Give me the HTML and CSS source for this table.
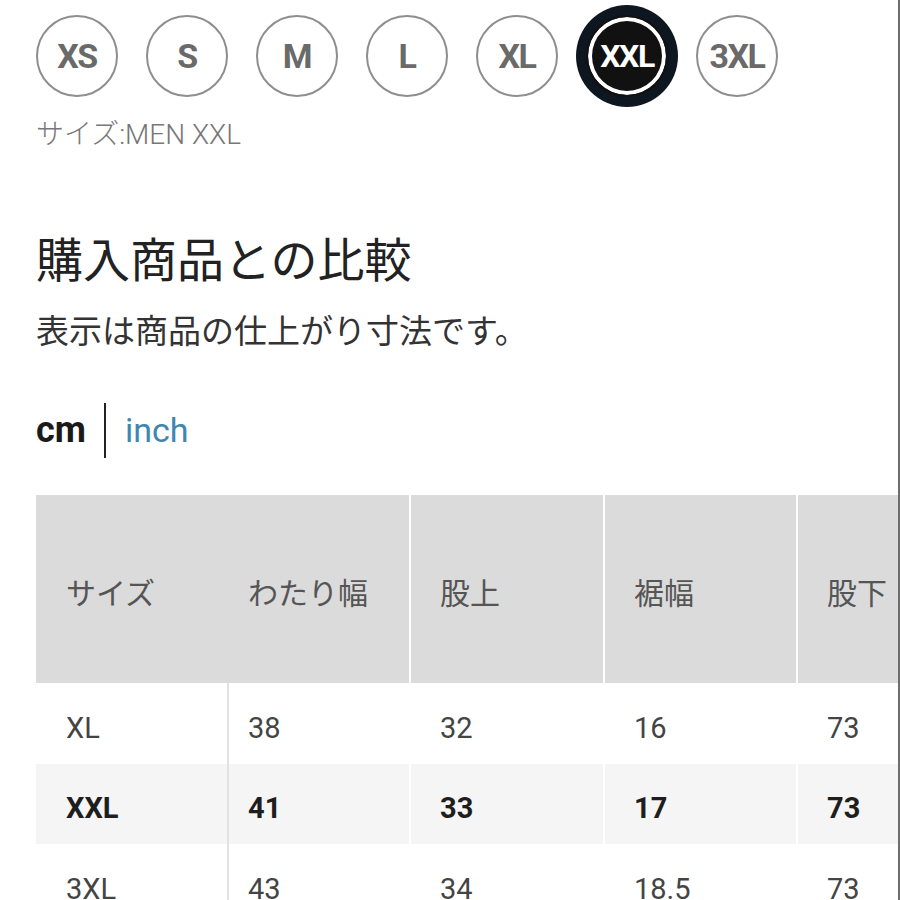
FILE: index.html
```html
<!DOCTYPE html>
<html lang="ja">
<head>
<meta charset="utf-8">
<link rel="stylesheet" href="styles.css">
</head>
<body>
<div class="page">
  <div class="sizes">
    <div class="size">XS</div>
    <div class="size">S</div>
    <div class="size">M</div>
    <div class="size">L</div>
    <div class="size">XL</div>
    <div class="size active">XXL</div>
    <div class="size">3XL</div>
  </div>
  <p class="size-label">サイズ:MEN XXL</p>
  <h2 class="title">購入商品との比較</h2>
  <p class="note">表示は商品の仕上がり寸法です。</p>
  <div class="units">
    <span class="unit-on">cm</span>
    <span class="sep"></span>
    <span class="unit-off">inch</span>
  </div>
  <table class="chart">
    <colgroup>
      <col class="c1"><col class="c2"><col class="c3"><col class="c4"><col class="c5">
    </colgroup>
    <thead>
      <tr>
        <th class="first">サイズ</th>
        <th class="second">わたり幅</th>
        <th>股上</th>
        <th>裾幅</th>
        <th>股下</th>
      </tr>
    </thead>
    <tbody>
      <tr>
        <td class="first">XL</td><td class="second">38</td><td>32</td><td>16</td><td>73</td>
      </tr>
      <tr class="current">
        <td class="first">XXL</td><td class="second">41</td><td>33</td><td>17</td><td>73</td>
      </tr>
      <tr>
        <td class="first">3XL</td><td class="second">43</td><td>34</td><td>18.5</td><td>73</td>
      </tr>
    </tbody>
  </table>
</div>
</body>
</html>
```

FILE: styles.css
```css
html, body {
  margin: 0;
  padding: 0;
  background: #fff;
}

.page {
  width: 900px;
  height: 900px;
  box-sizing: border-box;
  border-right: 2px solid #6e6e6e;
  overflow: hidden;
  padding: 15px 0 0 36px;
  font-family: "Noto Sans CJK JP", "Noto Sans", sans-serif;
}

.sizes {
  display: flex;
  gap: 28px;
}

.size {
  width: 82px;
  height: 82px;
  box-sizing: border-box;
  border-radius: 50%;
  border: 2px solid #8e8e8e;
  display: flex;
  align-items: center;
  justify-content: center;
  font-family: Roboto, "Liberation Sans", sans-serif;
  font-weight: 700;
  font-size: 34px;
  letter-spacing: -1.5px;
  color: #6a6a6a;
  flex: none;
}

.size.active {
  background: #111;
  color: #fff;
  font-size: 32px;
  border: 2px solid #111;
  box-shadow: inset 0 0 0 4px #fff, 0 0 0 10px #0e1620;
}

.size-label {
  margin: 20px 0 0;
  font-family: Roboto, "Noto Sans CJK JP", sans-serif;
  font-size: 28px;
  line-height: 36px;
  font-weight: 300;
  color: #777;
}

.title {
  margin: 74px 0 0;
  font-size: 47px;
  line-height: 60px;
  font-weight: 400;
  color: #222;
}

.note {
  margin: 20px 0 0;
  font-size: 33px;
  line-height: 44px;
  font-weight: 400;
  color: #333;
}

.units {
  margin-top: 51px;
  display: flex;
  align-items: center;
  height: 56px;
  font-family: Roboto, "Liberation Sans", sans-serif;
  font-size: 34px;
}

.unit-on {
  font-weight: 700;
  font-size: 36px;
  color: #1a1a1a;
}

.sep {
  width: 2px;
  height: 55px;
  background: #222;
  margin: 0 19px 0 18px;
}

.unit-off {
  color: #3f86b0;
  font-weight: 400;
}

.chart {
  margin-top: 37px;
  border-collapse: collapse;
  table-layout: fixed;
  width: 954px;
}

.chart .c1 { width: 192px; }
.chart .c2 { width: 182px; }
.chart .c3 { width: 194px; }
.chart .c4 { width: 193px; }
.chart .c5 { width: 193px; }

.chart th {
  height: 188px;
  padding: 4px 0 0 29px;
  box-sizing: border-box;
  background: #dbdbdb;
  text-align: left;
  font-weight: 400;
  font-size: 30px;
  color: #555;
  border-left: 2px solid #fff;
}

.chart th.first {
  border-left: none;
  padding-left: 30px;
}

.chart th.second {
  border-left: none;
  padding-left: 20px;
}

.chart td {
  height: 81px;
  padding: 8px 0 0 29px;
  box-sizing: border-box;
  font-family: Roboto, "Liberation Sans", sans-serif;
  font-size: 29px;
  font-weight: 400;
  color: #444;
  border-left: 2px solid #fff;
}

.chart td.first {
  border-left: none;
  border-right: 2px solid #e2e2e2;
  padding-left: 30px;
}

.chart td.second {
  border-left: none;
  padding-left: 19px;
}

.chart tr.current td {
  background: #f5f5f5;
  font-weight: 700;
  color: #1e1e1e;
  height: 80px;
}
```
